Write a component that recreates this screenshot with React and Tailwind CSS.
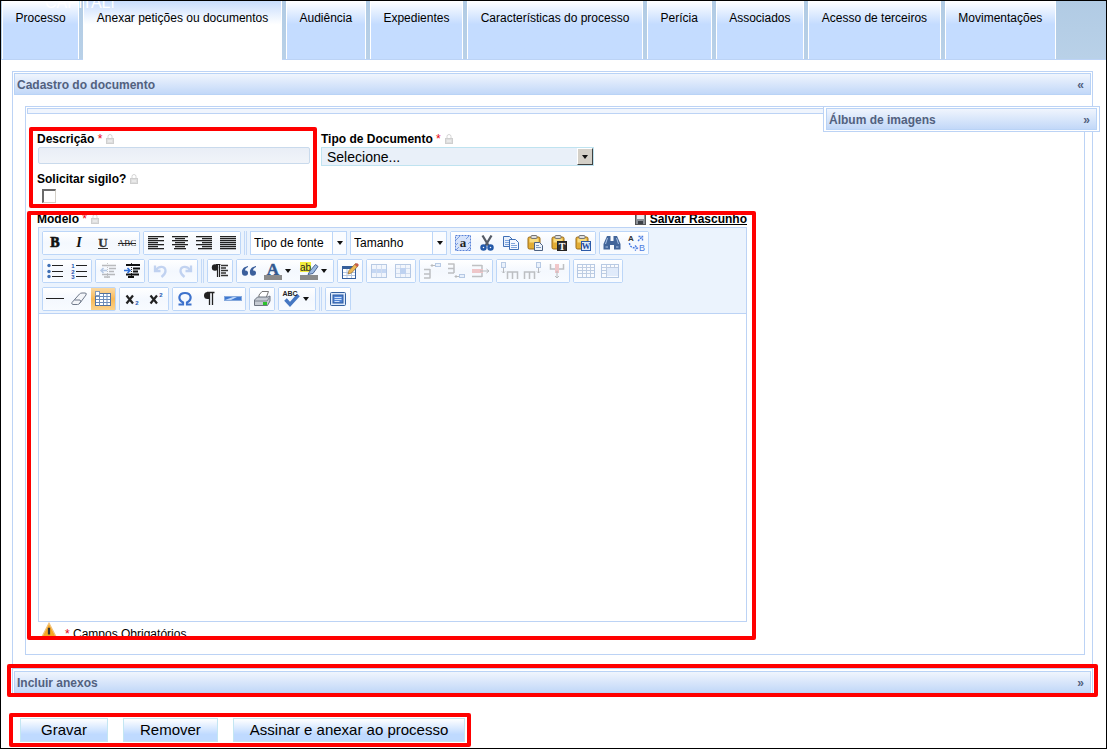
const tabs = [
  'Processo',
  'Anexar petições ou documentos',
  'Audiência',
  'Expedientes',
  'Características do processo',
  'Perícia',
  'Associados',
  'Acesso de terceiros',
  'Movimentações',
]

const G = '#3d4148'
const B = '#3f6fb5'

// Text lines two pixels apart, used by the alignment icons
function Lines({ rows }) {
  return rows.map(([x, w], i) => <rect key={i} x={x} y={1 + i * 2} width={w} height="1.300" fill="#222" />)
}

function Clipboard({ children }) {
  return (
    <>
      <rect x="1" y="2" width="12" height="12" rx="1.500" fill="#e2ad35" stroke="#9a6a16" />
      <rect x="2.500" y="3.500" width="9" height="4" fill="#f9dc80" />
      <rect x="4" y="0.500" width="6" height="3" rx="1" fill="#ddd" stroke="#777" />
      {children}
    </>
  )
}

const icons = {
  bold: <text x="8" y="12" textAnchor="middle" fontFamily="Liberation Serif" fontSize="14" fontWeight="700" stroke="#111" strokeWidth="0.700" fill="#111">B</text>,
  italic: <text x="8" y="12" textAnchor="middle" fontFamily="Liberation Serif" fontSize="14" fontWeight="700" fontStyle="italic" fill="#111">I</text>,
  underline: (
    <>
      <text x="8" y="12" textAnchor="middle" fontFamily="Liberation Serif" fontSize="13" fontWeight="700" stroke="#333" strokeWidth="0.300" fill="#333">U</text>
      <path d="M3 13.500h10" stroke="#333" />
    </>
  ),
  strike: (
    <>
      <text x="8" y="11" textAnchor="middle" fontFamily="Liberation Serif" fontSize="9" fill="#222">ABC</text>
      <path d="M-1 8.500h18" stroke="#222" />
    </>
  ),
  left: <Lines rows={[[0, 16], [0, 10], [0, 16], [0, 10], [0, 16], [0, 10], [0, 16]]} />,
  center: <Lines rows={[[0, 16], [3, 10], [0, 16], [3, 10], [0, 16], [3, 10], [2, 12]]} />,
  right: <Lines rows={[[0, 16], [6, 10], [0, 16], [6, 10], [0, 16], [6, 10], [2, 14]]} />,
  justify: <Lines rows={[[0, 16], [0, 16], [0, 16], [0, 16], [0, 16], [0, 16], [0, 16]]} />,
  selectAll: (
    <>
      <rect x="0.500" y="0.500" width="15" height="15" fill="#d6e3fa" stroke="#5a83d8" strokeDasharray="2 1" />
      <path d="M1 5l4-4M1 10L3 8M11 4l3-3M1 15l3-3M12 15l3-3M13 9l2-2" stroke="#7a9de0" />
      <text x="8" y="12" textAnchor="middle" fontFamily="Liberation Serif" fontSize="13" fontWeight="700" fill="#222">a</text>
    </>
  ),
  cut: (
    <>
      <path d="M3.500 0.500l6 10M12.500 0.500l-6 10" stroke="#555b66" strokeWidth="2.300" />
      <circle cx="4.500" cy="12.500" r="2" fill="none" stroke="#2459a8" strokeWidth="2.500" />
      <circle cx="11.500" cy="12.500" r="2" fill="none" stroke="#2459a8" strokeWidth="2.500" />
    </>
  ),
  copy: (
    <>
      <path d="M0.500 1.500h6l3 3v7h-9z" fill="#e8f0fc" stroke={B} />
      <path d="M6.500 4.500h6l3 3v7h-9z" fill="#f4f8ff" stroke={B} />
      <path d="M2 5.500h4M2 7.500h4M2 9.500h4M8 8.500h4M8 10.500h6M8 12.500h6" stroke="#7fa5dc" />
    </>
  ),
  paste: (
    <Clipboard>
      <path d="M7.500 7.500h5l3 3v5h-8z" fill="#edf3fb" stroke="#4c6181" />
      <path d="M9 10.500h3M9 12.500h5" stroke="#7b97bd" />
    </Clipboard>
  ),
  pasteText: (
    <Clipboard>
      <rect x="6.500" y="6.500" width="9" height="9" fill="#333" stroke="#222" />
      <text x="11" y="14.500" textAnchor="middle" fontFamily="Liberation Serif" fontSize="10" fontWeight="700" fill="#fff">T</text>
    </Clipboard>
  ),
  pasteWord: (
    <Clipboard>
      <rect x="6.500" y="6.500" width="9" height="9" fill="#dce9fb" stroke="#2c5aa8" />
      <text x="11" y="14" textAnchor="middle" fontFamily="Liberation Serif" fontSize="9" fontWeight="700" fill="#1e4da0">W</text>
    </Clipboard>
  ),
  find: (
    <>
      <path d="M3 1h3.500v5h3V1H13l3.500 8v5.500H10V10H6v4.500H-0.500V9z" fill="#42659a" />
      <path d="M3.500 3l-2 6M12.500 3l2 6M1.500 12h2.500M12 12h2.500" stroke="#a8c2e6" />
    </>
  ),
  replace: (
    <>
      <text x="3" y="6" textAnchor="middle" fontFamily="Liberation Sans" fontSize="8" fontWeight="700" fill="#333">A</text>
      <text x="14" y="16" textAnchor="middle" fontFamily="Liberation Sans" fontSize="9" fill="#4a7be0">B</text>
      <path d="M10 6l4-4M10.500 1.500h4V6M1.500 8c0 3 2 5 7 5M7 10.500L9.500 13 7 15.500" fill="none" stroke="#4a7be0" strokeWidth="1.400" strokeDasharray="2 1" />
    </>
  ),
  bullets: (
    <>
      {[2.5, 8.5, 13.5].map((y) => <circle key={y} cx="2" cy={y} r="1.700" fill={B} />)}
      <path d="M5 2.500h11M5 8.500h11M5 13.500h11" stroke="#222" />
    </>
  ),
  numbers: (
    <>
      {[1, 2, 3].map((n) => <text key={n} x="2" y={n * 5.5 - 0.5} textAnchor="middle" fontFamily="Liberation Sans" fontSize="6" fontWeight="700" fill="#1e52ad">{n}</text>)}
      <path d="M5 2.500h11M5 8.500h11M5 13.500h11" stroke="#222" />
    </>
  ),
  outdent: (
    <>
      <path d="M7.500 0v16" stroke="#666" strokeDasharray="1 1" />
      <path d="M2 2.500h14M9 5.500h7M9 8.500h5M2 11.500h13M4 14h6" stroke="#444" strokeWidth="1.500" />
      <path d="M7 7.500H1M3.500 5L1 7.500 3.500 10" fill="none" stroke={B} strokeWidth="1.500" />
    </>
  ),
  indent: (
    <>
      <path d="M7.500 0v16" stroke="#333" strokeDasharray="1 1" />
      <path d="M2 2h14M9 5.500h7M9 8.500h5M2 11.500h13M4 14h6" stroke="#111" strokeWidth="2" />
      <path d="M0 7.500h5M3.500 5L6 7.500 3.500 10" fill="none" stroke="#2f6fd8" strokeWidth="1.500" />
    </>
  ),
  undo: <path d="M2 2.500v5.500h5.500M2.500 7.500C6 2 12.500 3 12.500 8c0 3-2 4.500-4 6" fill="none" stroke="#5f8ad8" strokeWidth="2.300" />,
  redo: <path d="M14 2.500v5.500H8.500M13.500 7.500C10 2 3.500 3 3.500 8c0 3 2 4.500 4 6" fill="none" stroke="#5f8ad8" strokeWidth="2.300" />,
  blocks: (
    <>
      <path d="M8.500 1.500H4M5.500 1v13M7.500 1v13" fill="none" stroke="#222" strokeWidth="1.200" />
      <circle cx="3" cy="4.500" r="3.200" fill="#222" />
      <path d="M9 2.500h7M9 5h5M9 7.500h7M9 10h5M9 12.500h7" stroke="#333" strokeWidth="1.300" />
    </>
  ),
  quote: (
    <path d="M7 3C2 4 0.500 7 1 10a3 3 0 106-0.500A2.500 2.500 0 004 7.500C4 6 5 5 7 4zM15 3C10 4 8.500 7 9 10a3 3 0 106-0.500a2.500 2.500 0 00-3-2C12 6 13 5 15 4z" fill="#3b5f9c" />
  ),
  color: (
    <>
      <text x="8" y="12" textAnchor="middle" fontFamily="Liberation Serif" fontSize="17" fontWeight="700" stroke="#33598f" strokeWidth="0.500" fill="#33598f">A</text>
      <rect x="-1" y="12" width="18" height="5" fill="#8a8a8a" />
    </>
  ),
  highlight: (
    <>
      <rect x="-1" y="-1" width="11" height="10" fill="#f3ec3e" />
      <text x="4.500" y="7.500" textAnchor="middle" fontFamily="Liberation Sans" fontSize="10" fill="#222">ab</text>
      <path d="M7 11.500l2-3.500L14.500 1.500l2.500 2-5 7z" fill="#9bb8e0" stroke="#4a6593" />
      <rect x="-1" y="12" width="18" height="5" fill="#8a8a8a" />
    </>
  ),
  edit: (
    <>
      <rect x="0.500" y="3.500" width="13" height="12" fill="#fff" stroke="#355f9c" />
      <rect x="0" y="3" width="14" height="3" fill="#355f9c" />
      <path d="M1 9.500h12M1 12.500h12M5 6v9M9.500 6v9" stroke="#b5c7e0" />
      <path d="M6 11l1-3.500L13.500 0.500l2.500 2.500-6.500 7z" fill="#edb955" stroke="#8f6530" strokeWidth="0.700" />
      <path d="M12.500 1.500l2.500 2.500L17 2 15 0z" fill="#c65b4a" />
    </>
  ),
  rowProps: (
    <>
      <rect x="0.500" y="1.500" width="15" height="13" fill="#e8effa" stroke={B} />
      <rect x="1" y="6" width="14" height="4" fill="#6f9be0" />
      <path d="M5.500 2v12M10.500 2v12" stroke="#93acd2" />
    </>
  ),
  cellProps: (
    <>
      <rect x="0.500" y="1.500" width="15" height="13" fill="#e8effa" stroke={B} />
      <path d="M1 5.500h14M1 10.500h14M5.500 2v12M10.500 2v12" stroke="#93acd2" />
      <rect x="5" y="5" width="6" height="6" fill="#5d8cd8" />
    </>
  ),
  rowBefore: (
    <>
      <path d="M0 6.500h6M0 11h6M0 15h6M6 6v9.500" fill="none" stroke="#555" strokeWidth="1.500" />
      <path d="M7 2.500h4M8.500 1L7 2.500 8.500 4" fill="none" stroke="#444" />
      <rect x="11.500" y="0.500" width="5" height="3" fill="#cfe0f8" stroke={B} />
    </>
  ),
  rowAfter: (
    <>
      <path d="M0 1h6M0 5.500h6M0 10h6M6 0.500V10" fill="none" stroke="#555" strokeWidth="1.500" />
      <path d="M7 13.500h4M8.500 12L7 13.500 8.500 15" fill="none" stroke="#444" />
      <rect x="11.500" y="11.500" width="5" height="3" fill="#cfe0f8" stroke={B} />
    </>
  ),
  rowDelete: (
    <>
      <path d="M0 2.500h10M0 13.500h10M10 2v4M10 10v4" stroke="#555" strokeWidth="1.500" />
      <rect x="0" y="6" width="11" height="4" fill="#e36a6a" />
      <path d="M8 8h9M14.500 6l2.500 2-2.500 2" fill="none" stroke="#444" />
    </>
  ),
  colBefore: (
    <>
      <path d="M6.500 16V9h10v7M11.500 9v7" fill="none" stroke="#555" strokeWidth="1.500" />
      <rect x="0.500" y="-0.500" width="4" height="5" fill="#cfe0f8" stroke={B} />
      <path d="M2.500 5v5M1 8.500L2.500 10 4 8.500" fill="none" stroke="#444" />
    </>
  ),
  colAfter: (
    <>
      <path d="M-0.500 16V9h10v7M4.500 9v7" fill="none" stroke="#555" strokeWidth="1.500" />
      <rect x="11.500" y="-0.500" width="4" height="5" fill="#cfe0f8" stroke={B} />
      <path d="M13.500 5v5M12 8.500l1.500 1.500L15 8.500" fill="none" stroke="#444" />
    </>
  ),
  colDelete: (
    <>
      <path d="M1.500 1v5H6M14.500 1v5H10" fill="none" stroke="#555" strokeWidth="1.500" />
      <rect x="6" y="1" width="4" height="9" fill="#e36a6a" />
      <path d="M8 8v7M6 13l2 2 2-2" fill="none" stroke="#444" />
    </>
  ),
  split: (
    <>
      <rect x="-0.500" y="1.500" width="17" height="13" fill="#fff" stroke={B} />
      <path d="M0 4.500h16M0 7.500h16M0 10.500h16M4.500 2v12M8.500 2v12M12.500 2v12" stroke="#5a7cb0" />
    </>
  ),
  merge: (
    <>
      <rect x="-0.500" y="1.500" width="17" height="13" fill="#fff" stroke={B} />
      <path d="M0 4.500h16M4.500 2v12M8.500 2v3M12.500 2v3M0 7.500h4M0 10.500h4" stroke="#5a7cb0" />
      <rect x="5" y="5" width="11" height="8" fill="#bcd3f5" />
    </>
  ),
  rule: <path d="M-1 7.500h18" stroke="#222" />,
  eraser: <path d="M1 11.500L8.500 3q1-1 2.500-1h3q2 0 1 2L9 12q-1 1.500-2.500 1.500H2q-2-0.500-1-2zM3.500 9H9q1.500 1 0 3" fill="#f3f5f9" stroke="#707a8b" />,
  table: (
    <>
      <rect x="0.500" y="2.500" width="15" height="12" fill="#fff" stroke="#52719f" />
      <path d="M1 5.500h14M1 8.500h14M1 11.500h14M4.500 0v15M8.500 3v11M12 3v11" stroke="#6d8cba" />
      <rect x="0.500" y="0.500" width="4" height="4" fill="#fff" stroke="#8298b8" />
    </>
  ),
  sub: (
    <>
      <path d="M2.500 4.500l6.500 8M9 4.500l-6.500 8" stroke="#222" strokeWidth="2.200" />
      <text x="13" y="14" textAnchor="middle" fontFamily="Liberation Sans" fontSize="6" fontWeight="700" fill="#2459b0">2</text>
    </>
  ),
  sup: (
    <>
      <path d="M2.500 4.500l6.500 8M9 4.500l-6.500 8" stroke="#222" strokeWidth="2.200" />
      <text x="13" y="6" textAnchor="middle" fontFamily="Liberation Sans" fontSize="6" fontWeight="700" fill="#2459b0">2</text>
    </>
  ),
  omega: <path d="M1.500 13.500H6v-2C0 8 2 2 8 2s8 6 2 9.500v2h4.500" fill="none" stroke="#3d72cc" strokeWidth="2.200" />,
  pilcrow: (
    <>
      <path d="M13.500 1.500H6M8.500 1v13M11.500 1v13" stroke="#222" strokeWidth="1.300" />
      <path d="M8.500 1H6.500a3.500 3.500 0 000 7h2z" fill="#222" />
    </>
  ),
  pageBreak: (
    <>
      <rect x="-0.500" y="5.500" width="17" height="4" fill="#3f78d0" stroke="#86a9dc" />
      <path d="M0 9l8-3h4l-6 3z" fill="#b9d5fa" />
    </>
  ),
  print: (
    <>
      <path d="M5 7V4l3-3.500h6.500L12 7z" fill="#fff" stroke="#777" />
      <path d="M0.500 9l3-3H14l2-1v5l-2.500 4.500H0.500z" fill="#c5cad2" stroke="#6d7480" />
      <path d="M1 10h12l2.500-3.500" fill="none" stroke="#7d8490" />
      <rect x="9" y="11" width="4" height="3" fill="#2dc22d" />
    </>
  ),
  spell: (
    <>
      <path d="M2.500 8.500L7 13.500 15.500 4" fill="none" stroke="#4577c2" strokeWidth="3.500" />
      <text x="7" y="5" textAnchor="middle" fontFamily="Liberation Sans" fontSize="7" fontWeight="700" fill="#222">ABC</text>
    </>
  ),
  fullscreen: (
    <>
      <rect x="0.500" y="1.500" width="15" height="13" rx="1" fill="#dce9fb" stroke="#33609f" />
      <rect x="3" y="4" width="10" height="8" fill="#4f82d2" stroke="#2d5ba0" />
      <path d="M4.500 6.500h7M4.500 8.500h7M4.500 10.500h5" stroke="#cfe1fa" />
    </>
  ),
}

// A group is a list of [icon, title, state]; '|' is a separator
const rows = [
  [
    [['bold', 'Negrito'], ['italic', 'Itálico'], ['underline', 'Sublinhado'], ['strike', 'Riscado']],
    [['left', 'Alinhar à esquerda'], ['center', 'Centralizar'], ['right', 'Alinhar à direita'], ['justify', 'Justificar']],
    '|',
    'Tipo de fonte',
    'Tamanho',
    [['selectAll', 'Selecionar tudo'], ['cut', 'Recortar'], ['copy', 'Copiar'], ['paste', 'Colar'], ['pasteText', 'Colar como texto'], ['pasteWord', 'Colar do Word']],
    [['find', 'Localizar'], ['replace', 'Substituir']],
  ],
  [
    [['bullets', 'Marcadores'], ['numbers', 'Numeração']],
    [['outdent', 'Diminuir recuo', 'off'], ['indent', 'Aumentar recuo']],
    [['undo', 'Desfazer', 'off'], ['redo', 'Refazer', 'off']],
    '|',
    [['blocks', 'Mostrar blocos']],
    [['quote', 'Citação'], ['color', 'Cor do texto', 'menu'], ['highlight', 'Cor de fundo', 'menu']],
    [['edit', 'Editar estilo']],
    [['rowProps', 'Propriedades da linha', 'off'], ['cellProps', 'Propriedades da célula', 'off']],
    [['rowBefore', 'Inserir linha antes', 'off'], ['rowAfter', 'Inserir linha depois', 'off'], ['rowDelete', 'Remover linha', 'off']],
    [['colBefore', 'Inserir coluna antes', 'off'], ['colAfter', 'Inserir coluna depois', 'off'], ['colDelete', 'Remover coluna', 'off']],
    [['split', 'Dividir células', 'off'], ['merge', 'Mesclar células', 'off']],
  ],
  [
    [['rule', 'Linha horizontal'], ['eraser', 'Remover formatação'], ['table', 'Linhas guia', 'on']],
    [['sub', 'Subscrito'], ['sup', 'Sobrescrito']],
    [['omega', 'Caractere especial'], ['pilcrow', 'Caracteres de controle'], ['pageBreak', 'Quebra de página']],
    [['print', 'Imprimir']],
    [['spell', 'Verificar ortografia', 'menu']],
    '|',
    [['fullscreen', 'Tela cheia']],
  ],
]

function Caret() {
  return (
    <svg width="6" height="4" viewBox="0 0 6 4" className="shrink-0">
      <path d="M0 0h6L3 4z" fill="#111" />
    </svg>
  )
}

function ToolButton({ icon, title, state }) {
  return (
    <button
      type="button"
      title={title}
      aria-label={title}
      disabled={state === 'off'}
      className={`flex h-[22px] items-center gap-1 px-1 ${state === 'menu' ? 'w-9' : 'w-6'} ${state === 'on' ? 'bg-linear-to-b from-[#fbd9a0] via-[#f9b955] to-[#fbd28a]' : 'bg-linear-to-b from-white via-[#f4f8fe] to-[#f8fbff]'}`}
    >
      <svg width="16" height="16" viewBox="0 0 16 16" className={`shrink-0 overflow-visible ${state === 'off' ? 'opacity-35' : ''}`}>
        {icons[icon]}
      </svg>
      {state === 'menu' && <Caret />}
    </button>
  )
}

function ToolSelect({ label }) {
  return (
    <div className="relative h-6 w-[97px]">
      <select aria-label={label} className="h-6 w-full appearance-none border border-[#bcd6f8] bg-white pl-[3px] text-xs text-black">
        <option>{label}</option>
      </select>
      <span className="pointer-events-none absolute inset-y-px right-px flex w-[14px] items-center justify-center border-l border-[#bcd6f8] bg-[#fafcff]">
        <Caret />
      </span>
    </div>
  )
}

function Toolbar() {
  return (
    <div role="toolbar" className="flex flex-col gap-1 border-b border-[#bcd3f5] bg-[#ebf3fd] px-[3px] pt-[3px] pb-[2px]">
      {rows.map((row, r) => (
        <div key={r} className="flex gap-[3px]">
          {row.map((group, g) => {
            if (group === '|') return <span key={g} className="h-6 w-[3px] border-x border-[#c3d9f7]" />
            if (typeof group === 'string') return <ToolSelect key={g} label={group} />
            return (
              <div key={g} className="flex rounded-xs border border-[#bcd6f8]">
                {group.map(([icon, title, state]) => <ToolButton key={icon} icon={icon} title={title} state={state} />)}
              </div>
            )
          })}
        </div>
      ))}
    </div>
  )
}

function PanelHeader({ title, open }) {
  return (
    <button
      type="button"
      className="flex h-[22px] w-full items-center justify-between border border-[#b9d3f6] bg-linear-to-b from-[#f0f5fd] to-[#c2d8f8] px-[2px] pt-px text-left font-bold text-[#52617f]"
    >
      <span>{title}</span>
      <span className="pr-1">{open ? '«' : '»'}</span>
    </button>
  )
}

function Lock() {
  return (
    <svg width="8" height="10" viewBox="0 0 8 10">
      <path d="M2 5V2.500a2 2 0 014 0V5" fill="none" stroke="#d4d4d4" />
      <rect x="0.500" y="4.500" width="7" height="5" fill="#dedede" stroke="#cfcfcf" />
      <path d="M2 7h4" stroke="#f5f5f5" />
    </svg>
  )
}

function FieldLabel({ htmlFor, required, children }) {
  return (
    <label htmlFor={htmlFor} className="flex h-4 items-center gap-1 font-bold text-black">
      <span>
        {children}
        {required && <span className="font-normal text-red-600"> *</span>}
      </span>
      <Lock />
    </label>
  )
}

// Red frame around the area being explained
function Mark({ className }) {
  return <div aria-hidden="true" className={`pointer-events-none absolute rounded-xs border-4 border-[#ff0000] ${className}`} />
}

export default function App() {
  return (
    <div className="min-h-screen border border-black bg-white font-['Liberation_Sans',Arial,sans-serif] text-xs text-black">
      <nav className="relative flex h-[59px] gap-1 border-b border-[#bcd3f5] bg-linear-to-b from-[#b1cbe4] to-[#b9d1e8] pr-[50px] pl-px">
        {tabs.map((tab, i) => (
          <button
            key={tab}
            type="button"
            className={`flex flex-auto justify-center border-x border-white pt-[9px] leading-4 whitespace-nowrap ${i === 1 ? '-mb-px bg-linear-to-b from-[#c8ddfd] to-white to-40%' : 'bg-linear-to-b from-white to-[#c4dcff] to-40%'}`}
          >
            {tab}
          </button>
        ))}
        <span aria-hidden="true" className="pointer-events-none absolute top-0 left-[44px] flex h-[7px] items-end overflow-hidden text-base leading-[10px] text-white">
          CAPITAL|
        </span>
      </nav>

      <main className="pt-[11px] pr-[13px] pb-[5px] pl-[11px]">
        <section className="border border-b-0 border-[#bcd3f5] p-px">
          <PanelHeader title="Cadastro do documento" open />

          <div className="relative mt-[11px] mr-[6px] mb-3 ml-[11px] border border-[#bcd3f5] p-px">
            <div className="h-[6px] border border-[#bcd3f5] bg-[#f0f5fd]" />

            <div className="absolute -top-px -right-4 w-[277px] border border-[#bcd3f5] bg-white px-[2px] py-px">
              <PanelHeader title="Álbum de imagens" />
            </div>

            <form className="pt-[17px] pb-[13px] pl-[10px]">
              <div className="flex">
                <div className="relative w-[284px]">
                  <FieldLabel htmlFor="descricao" required>Descrição</FieldLabel>
                  <input
                    id="descricao"
                    type="text"
                    className="ml-px block h-[17px] w-[272px] rounded-xs border border-[#c9daec] bg-linear-to-b from-[#e9eef6] to-[#f1f4f9] px-1"
                  />
                  <div className="mt-[7px]">
                    <FieldLabel htmlFor="sigilo">Solicitar sigilo?</FieldLabel>
                  </div>
                  <input
                    id="sigilo"
                    type="checkbox"
                    className="mt-[2px] mb-2 ml-[5px] block size-[14px] appearance-none border-t-2 border-r border-b border-l-2 border-t-[#6b6b6b] border-r-[#d4d0c8] border-b-[#d4d0c8] border-l-[#6b6b6b] bg-white"
                  />
                  <Mark className="-top-1 -left-2 h-[81px] w-72" />
                </div>

                <div>
                  <FieldLabel htmlFor="tipo" required>Tipo de Documento</FieldLabel>
                  <div className="relative">
                    <select
                      id="tipo"
                      className="block h-[19px] w-[273px] appearance-none border border-[#bfe3f0] bg-[#e9f0f9] pl-[5px] text-sm leading-4 text-black"
                    >
                      <option>Selecione...</option>
                    </select>
                    <span className="pointer-events-none absolute inset-y-px right-px flex w-4 items-center justify-center border border-t-white border-r-[#404040] border-b-[#404040] border-l-white bg-[#d4d0c8]">
                      <Caret />
                    </span>
                  </div>
                </div>
              </div>

              <div className="relative w-[710px]">
                <div className="flex h-4 items-end justify-between">
                  <FieldLabel htmlFor="modelo" required>Modelo</FieldLabel>
                  <a href="#rascunho" className="flex items-center gap-1 font-bold text-black">
                    <svg width="11" height="11" viewBox="0 0 11 11">
                      <rect x="0.500" y="0.500" width="10" height="10" fill="#8a8f96" stroke="#555" />
                      <rect x="2" y="1" width="7" height="4" fill="#e8ebef" />
                      <rect x="3" y="7" width="5" height="3" fill={G} />
                    </svg>
                    <span className="underline">Salvar Rascunho</span>
                  </a>
                </div>
                <div className="ml-px border border-[#bcd3f5]">
                  <Toolbar />
                  <textarea id="modelo" className="block h-[307px] w-full resize-none bg-white p-2 outline-none" />
                </div>
                <p className="flex h-[18px] gap-[7px] overflow-hidden pl-[3px]">
                  <svg width="18" height="18" viewBox="0 0 16 16" className="shrink-0">
                    <path d="M8 1l7.500 14.500H0.500z" fill="#f7a823" stroke="#f3c27a" />
                    <path d="M8 5v6M8 12.500v1.500" stroke="#333" strokeWidth="2" />
                  </svg>
                  <span className="pt-1 leading-4">
                    <span className="text-red-600">*</span> Campos Obrigatórios
                  </span>
                </p>
                <Mark className="top-0 -right-[9px] bottom-0 -left-[10px]" />
              </div>
            </form>
          </div>
        </section>

        <section className="relative border border-b-0 border-[#bcd3f5] p-px pt-[2px]">
          <PanelHeader title="Incluir anexos" />
          <Mark className="-top-[5px] -right-[6px] -bottom-[3px] -left-[6px]" />
        </section>

        <div className="relative mt-6 flex w-fit gap-[15px] pl-2">
          {['Gravar', 'Remover', 'Assinar e anexar ao processo'].map((label) => (
            <button
              key={label}
              type="button"
              className="h-6 min-w-[88px] border border-[#c3e6f2] bg-linear-to-b from-white to-[#bfdaff] to-70% px-4 text-[15px] leading-5"
            >
              {label}
            </button>
          ))}
          <Mark className="-top-[5px] -right-[6px] -bottom-[5px] -left-[3px]" />
        </div>
      </main>
    </div>
  )
}
